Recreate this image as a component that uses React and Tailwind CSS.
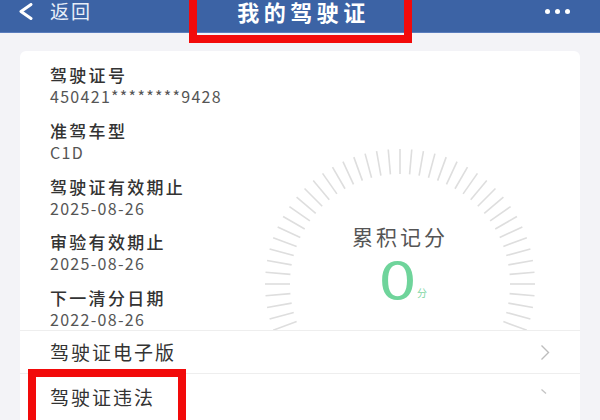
import React from 'react';

const font = { fontFamily: '"Noto Sans CJK SC", "Noto Sans", sans-serif' };

const items = [
  { label: '驾驶证号', value: '450421********9428' },
  { label: '准驾车型', value: 'C1D' },
  { label: '驾驶证有效期止', value: '2025-08-26' },
  { label: '审验有效期止', value: '2025-08-26' },
  { label: '下一清分日期', value: '2022-08-26' },
];

const Gauge = () => {
  const cx = 150;
  const cy = 233;
  const ticks = [];
  for (let a = -130; a <= 130; a += 5) {
    const r = (a * Math.PI) / 180;
    ticks.push(
      <line
        key={a}
        x1={cx + Math.sin(r) * 110}
        y1={cy - Math.cos(r) * 110}
        x2={cx + Math.sin(r) * 135}
        y2={cy - Math.cos(r) * 135}
        stroke="#dedede"
        strokeWidth="1.6"
      />
    );
  }
  return (
    <svg className="absolute inset-0" width="330" height="280" viewBox="0 0 330 280">
      {ticks}
    </svg>
  );
};

export default function App() {
  return (
    <div className="relative w-[600px] h-[420px] overflow-hidden bg-[#f3f3f7]" style={font}>
      {/* header */}
      <div className="h-[33px] bg-[#3c63a5] border-b border-[#5a7dbd] flex items-start">
        <div className="h-[22px] w-full flex items-center px-[18px] text-white">
          <svg width="16" height="17" viewBox="0 0 16 17" className="mr-[16px]">
            <path d="M13 1.5 L3 8.5 L13 15.5" fill="none" stroke="white" strokeWidth="3" strokeLinecap="round" strokeLinejoin="round" />
          </svg>
          <span className="text-[19px] leading-[22px] tracking-[2px] text-[#e8eef8]">返回</span>
          <div className="flex-1 flex justify-center pr-[30px]">
            <span className="text-[22px] leading-[22px] font-bold tracking-[4.5px]">我的驾驶证</span>
          </div>
          <div className="flex gap-[5px] mr-[12px]">
            <span className="w-[5px] h-[5px] rounded-full bg-white" />
            <span className="w-[5px] h-[5px] rounded-full bg-white" />
            <span className="w-[5px] h-[5px] rounded-full bg-white" />
          </div>
        </div>
      </div>

      {/* card */}
      <div className="mx-[20px] mt-[18px] bg-white rounded-[6px]">
        <div className="h-[280px] flex overflow-hidden border-b border-[#eeeeee]">
          <div className="w-[230px] shrink-0 pl-[30px] pt-[13px] flex flex-col gap-[13.75px]">
            {items.map((it) => (
              <div key={it.label}>
                <div className="text-[17px] leading-[22px] font-medium tracking-[2.3px] text-[#333333]">{it.label}</div>
                <div className="text-[16px] leading-[20px] tracking-[1.3px] text-[#555555]">{it.value}</div>
              </div>
            ))}
          </div>
          <div className="relative flex-1">
            <Gauge />
            <div className="relative w-[300px] pt-[173px] flex flex-col items-center">
              <div className="text-[21px] leading-[24px] tracking-[3px] text-[#555555]">累积记分</div>
              <div className="flex items-end mt-[4px]">
                <span className="inline-block ml-[10px] text-[52px] leading-[50px] text-[#6fd49b] scale-x-[1.3]">0</span>
                <span className="text-[10px] leading-[14px] text-[#7fd6a4] ml-[5px] mb-[2px]">分</span>
              </div>
            </div>
          </div>
        </div>
        <div className="h-[43px] flex items-center justify-between pl-[30px] pr-[30px] border-b border-[#eeeeee]">
          <span className="text-[19px] tracking-[2px] text-[#333333]">驾驶证电子版</span>
          <svg width="10" height="17" viewBox="0 0 10 17">
            <path d="M1.5 1.5 L8.5 8.5 L1.5 15.5" fill="none" stroke="#bdbdbd" strokeWidth="1.4" />
          </svg>
        </div>
        <div className="h-[60px] flex items-start justify-between pl-[30px] pr-[30px] pt-[10px]">
          <span className="text-[19px] leading-[26px] tracking-[2px] text-[#333333]">驾驶证违法</span>
          <svg width="10" height="17" viewBox="0 0 10 17" className="mt-[4px]">
            <path d="M1.5 1.5 L6 5.5" fill="none" stroke="#c4c4c4" strokeWidth="1.4" />
          </svg>
        </div>
      </div>

      {/* annotation boxes */}
      <div className="absolute left-[189px] top-[-10px] w-[223px] h-[53px] border-[8px] border-[#f20a0a]" />
      <div className="absolute left-[28px] top-[369px] w-[158px] h-[60px] border-[8px] border-[#f20a0a]" />
    </div>
  );
}
